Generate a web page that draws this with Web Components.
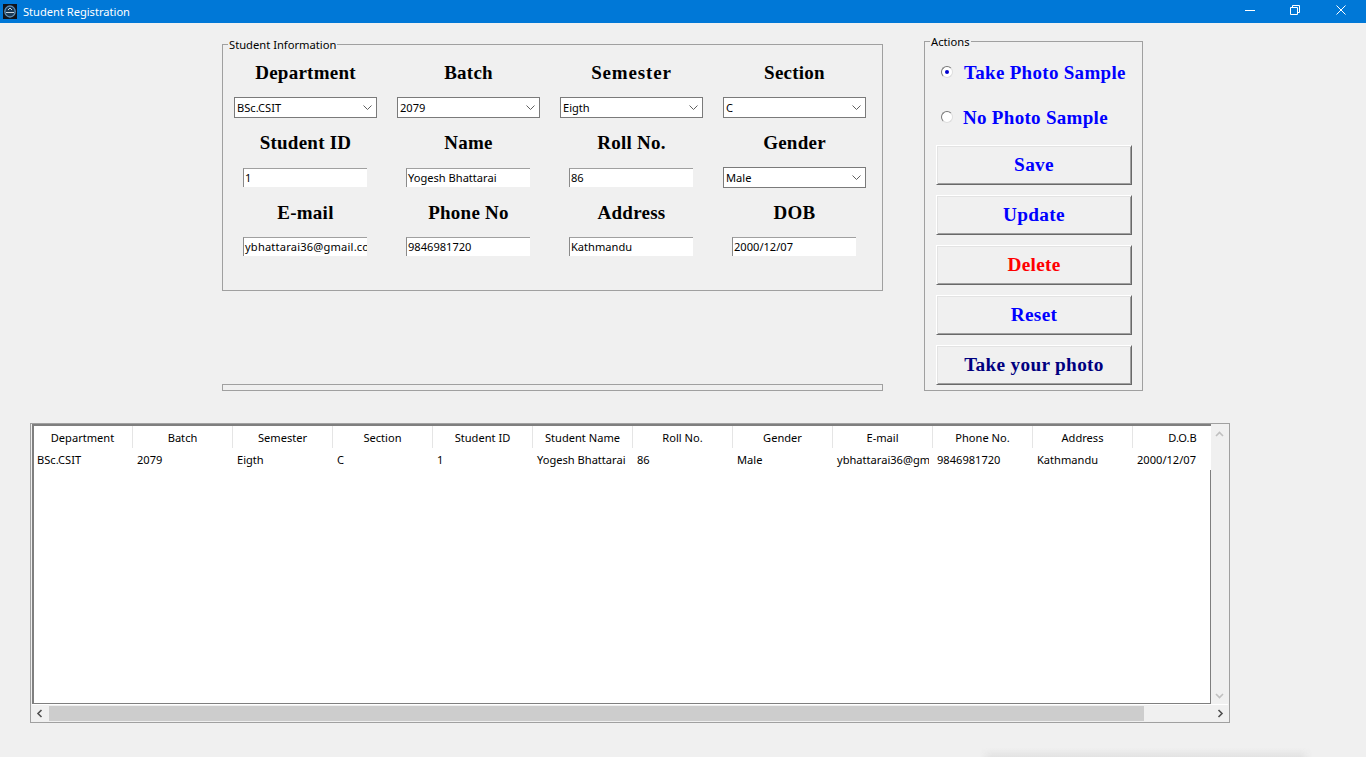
<!DOCTYPE html>
<html><head><meta charset="utf-8"><style>
html,body{margin:0;height:100%;background:#f0f0f0;overflow:hidden}
body{font:11.1px/1.2 "Noto Sans","Liberation Sans",sans-serif;color:#000}
</style></head><body>
<app-window></app-window>
<script>
function el(name,css,html,extra){customElements.define(name,class extends HTMLElement{constructor(){super();const s=this.attachShadow({mode:'open'});s.innerHTML='<style>'+css+'</style>'+html;if(extra)extra.call(this,s)}})}
el('title-bar',`:host{display:flex;align-items:center;height:23px;background:#0078d7;color:#fff;font:11.1px "Noto Sans",sans-serif;padding-right:2px}
.ic{margin:0 6px 0 3px;width:14px;height:15px;display:block}
.t{flex:1}
.b{width:46px;height:23px;box-sizing:border-box;padding-top:5px;display:flex;justify-content:center}
.b.m{width:44px}
svg{display:block}`,
`<svg class="ic" viewBox="0 0 14 15"><rect width="14" height="15" fill="#12151b"/><ellipse cx="7" cy="7.500" rx="5.200" ry="5.500" fill="#1b3a55" stroke="#5f8fb5" stroke-width="1.300"/><path d="M3 8.500h8M5 6l2-2 2 2" fill="none" stroke="#c8d4de" stroke-width="1"/></svg>
<span class="t"><slot></slot></span>
<span class="b m"><svg width="10" height="10"><path d="M0 5.500h10" stroke="#fff"/></svg></span>
<span class="b"><svg width="10" height="10"><path d="M.5 2.500h7v7h-7zM2.500 2.500v-2h7v7h-2" fill="none" stroke="#fff"/></svg></span>
<span class="b"><svg width="10" height="10"><path d="M.5.500l9 9M9.500.500l-9 9" stroke="#fff" fill="none"/></svg></span>`);
el('group-box',`:host{display:block;position:relative;border:1px solid #a0a0a0;box-sizing:border-box}
.lg{position:absolute;left:5px;top:-7px;background:#f0f0f0;padding:0 1px;font:11.2px/13px "Noto Sans",sans-serif}`,
`<span class="lg"></span><slot></slot>`,function(s){s.querySelector('.lg').textContent=this.getAttribute('label')});
el('form-cell',`:host{display:flex;flex-direction:column;align-items:center;width:163px}
.l{height:48px;display:flex;align-items:center;font:bold 19px "Liberation Serif",serif;letter-spacing:var(--ls,.25px)}
.f{height:22px;display:flex;align-items:flex-start}`,
`<div class="l"></div><div class="f"><slot></slot></div>`,function(s){s.querySelector('.l').textContent=this.getAttribute('label')});
el('combo-box',`:host{display:flex;align-items:center;justify-content:space-between;box-sizing:border-box;width:143px;height:21px;background:#fff;border:1px solid #7a7a7a;padding:0 4px 0 2px;font:11.1px "Noto Sans",sans-serif}
svg{display:block}`,`<slot></slot><svg width="9" height="5"><path d="M.5.500L4.500 4.500 8.500.500" fill="none" stroke="#606060"/></svg>`);
el('text-entry',`:host{display:block;box-sizing:border-box;width:124px;height:19px;margin:1px 1px 0 0;background:#fff;border-left:1px solid #8a8a8a;border-top:1px solid #a0a0a0;padding:0 0 0 1px;font:11.1px/17px "Noto Sans",sans-serif;overflow:hidden;white-space:nowrap}
:host([up]){margin-top:0}`,`<slot></slot>`);
el('radio-opt',`:host{display:flex;align-items:center;height:24px;color:#0000ff;font:bold 19px "Liberation Serif",serif;letter-spacing:.3px}
i{display:flex;align-items:center;justify-content:center;box-sizing:border-box;width:12px;height:12px;border-radius:50%;background:#fff;border:1px solid #777;border-right-color:#ddd;border-bottom-color:#ddd;margin:-2px 11px 0 0}
:host([near]) i{margin-right:10px}
b{width:4px;height:4px;border-radius:50%;background:#0000d0;display:none}
:host([checked]) b{display:block}`,`<i><b></b></i><slot></slot>`);
el('push-button',`:host{display:flex;align-items:center;justify-content:center;box-sizing:border-box;width:196px;height:40px;background:#f0f0f0;border:1px solid;border-color:#fff #696969 #696969 #fff;box-shadow:inset 1px 1px #e3e3e3,inset -1px -1px #a0a0a0;font:bold 19.3px "Liberation Serif",serif;letter-spacing:.3px;color:#0000ff}
:host([kind=red]){color:#ff0000}:host([kind=navy]){color:#000080}`,`<slot></slot>`);
el('data-table',`:host{display:block;box-sizing:border-box;width:1200px;height:300px;border:1px solid #a0a0a0;background:#f0f0f0;padding:0 1px 1px 1px;position:relative}
.wrap{display:grid;grid-template-columns:1179px 17px;grid-template-rows:280px 17px;height:100%}
.tree{background:#fff;border:solid #7f7f7f;border-width:2px 0 1px 2px;box-sizing:border-box;overflow:hidden;position:relative;font:11.1px "Noto Sans",sans-serif}
.tree::after{content:"";position:absolute;right:0;top:44px;bottom:0;width:1px;background:#7f7f7f}
.hd,.row{display:grid;grid-template-columns:repeat(12,100px);width:1200px;margin-left:-1px}
.hd{height:22px}.hd span{display:flex;align-items:center;justify-content:center;border-right:1px solid #e5e5e5;white-space:nowrap;box-sizing:border-box}
.row{height:20px;margin-top:1px;align-items:center}.row span{padding-left:4px;margin-right:4px;white-space:nowrap;overflow:hidden;box-sizing:border-box}
.v{display:flex;flex-direction:column;align-items:center;justify-content:space-between;padding:7px 0 5px;box-sizing:border-box}
.h{display:flex;align-items:center;background:#f0f0f0;border-top:1px solid #fff;box-sizing:border-box}
.h .th{width:1095px;height:15px;background:#cdcdcd;margin-left:6px}
.h svg{margin-left:4px}
.corner{background:#f0f0f0;border-top:1px solid #fff;display:flex;align-items:center;justify-content:center;padding-left:1px}
svg{display:block}`,
`<div class="wrap"><div class="tree"><div class="hd"></div><div class="row"></div></div>
<div class="v"><svg width="9" height="6"><path d="M1 5l3.500-3.500L8 5" fill="none" stroke="#c0c0c0" stroke-width="1.600"/></svg><svg width="9" height="6"><path d="M1 1l3.500 3.500L8 1" fill="none" stroke="#c0c0c0" stroke-width="1.600"/></svg></div>
<div class="h"><svg width="7" height="9"><path d="M5.500 1L2 4.500 5.500 8" fill="none" stroke="#505050" stroke-width="1.600"/></svg><div class="th"></div></div>
<div class="corner"><svg width="7" height="9"><path d="M1.500 1L5 4.500 1.500 8" fill="none" stroke="#505050" stroke-width="1.600"/></svg></div></div>`,
function(s){
const H=['Department','Batch','Semester','Section','Student ID','Student Name','Roll No.','Gender','E-mail','Phone No.','Address','D.O.B'];
const R=['BSc.CSIT','2079','Eigth','C','1','Yogesh Bhattarai','86','Male','ybhattarai36@gmail.com','9846981720','Kathmandu','2000/12/07'];
const mk=(p,a)=>a.forEach(t=>{const e=document.createElement('span');e.textContent=t;p.appendChild(e)});
mk(s.querySelector('.hd'),H);mk(s.querySelector('.row'),R);
});
el('app-window',`:host{display:block;height:757px;position:relative;overflow:hidden}
.top{display:flex;gap:41px;margin:18px 0 0 222px}
.left{width:661px;height:350px;display:flex;flex-direction:column;justify-content:space-between;padding-top:3px;box-sizing:border-box}
.info{height:247px}
.grid{display:grid;grid-template-columns:repeat(4,163px);padding:4px 0 0 1px}
.bar{height:7px;border:1px solid #a0a0a0;box-sizing:border-box}
.act{width:219px;height:350px;padding:19px 0 0 11px;box-sizing:border-box}
.act radio-opt{margin-left:5px}
.act radio-opt+radio-opt{margin-top:21px}
.btns{display:flex;flex-direction:column;gap:10px;margin-top:15px}
data-table{margin:32px 0 0 30px}
.sh{position:absolute;left:980px;width:332px;bottom:0;height:9px;background:linear-gradient(rgba(226,226,226,0),#e2e2e2);-webkit-mask-image:linear-gradient(90deg,transparent,#000 12px,#000 320px,transparent)}`,
`<title-bar>Student Registration</title-bar>
<div class="top"><div class="left">
<group-box class="info" label="Student Information"><div class="grid">
<form-cell label="Department"><combo-box>BSc.CSIT</combo-box></form-cell>
<form-cell label="Batch"><combo-box>2079</combo-box></form-cell>
<form-cell label="Semester" style="--ls:.85px"><combo-box>Eigth</combo-box></form-cell>
<form-cell label="Section"><combo-box>C</combo-box></form-cell>
<form-cell label="Student ID"><text-entry>1</text-entry></form-cell>
<form-cell label="Name"><text-entry>Yogesh Bhattarai</text-entry></form-cell>
<form-cell label="Roll No."><text-entry>86</text-entry></form-cell>
<form-cell label="Gender"><combo-box>Male</combo-box></form-cell>
<form-cell label="E-mail"><text-entry up style="letter-spacing:.2px">ybhattarai36@gmail.com</text-entry></form-cell>
<form-cell label="Phone No"><text-entry up>9846981720</text-entry></form-cell>
<form-cell label="Address"><text-entry up>Kathmandu</text-entry></form-cell>
<form-cell label="DOB"><text-entry up>2000/12/07</text-entry></form-cell>
</div></group-box>
<div class="bar"></div></div>
<group-box class="act" label="Actions">
<radio-opt checked>Take Photo Sample</radio-opt>
<radio-opt near>No Photo Sample</radio-opt>
<div class="btns"><push-button>Save</push-button><push-button>Update</push-button><push-button kind="red">Delete</push-button><push-button>Reset</push-button><push-button kind="navy">Take your photo</push-button></div>
</group-box></div>
<data-table></data-table><div class="sh"></div>`);
</script></body></html>
